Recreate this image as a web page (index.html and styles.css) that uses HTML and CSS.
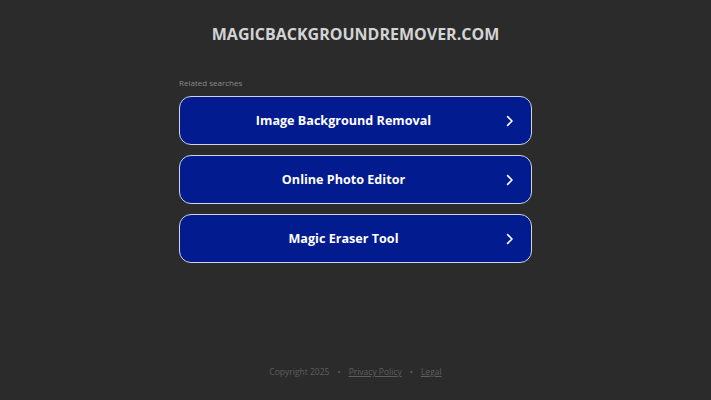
FILE: index.html
```html
<!DOCTYPE html>
<html>
<head>
<meta charset="utf-8">
<link rel="stylesheet" href="styles.css">
</head>
<body>
<div class="page">
  <header class="site-title">magicbackgroundremover.com</header>
  <main class="searches">
    <div class="label">Related searches</div>
    <div class="list">
      <a class="item" href="#"><span class="text">Image Background Removal</span><svg class="chev" viewBox="0 0 10 14" width="8" height="12"><path d="M2 1.5 L7.5 7 L2 12.5" fill="none" stroke="#fff" stroke-width="2" stroke-linecap="round" stroke-linejoin="round"/></svg></a>
      <a class="item" href="#"><span class="text">Online Photo Editor</span><svg class="chev" viewBox="0 0 10 14" width="8" height="12"><path d="M2 1.5 L7.5 7 L2 12.5" fill="none" stroke="#fff" stroke-width="2" stroke-linecap="round" stroke-linejoin="round"/></svg></a>
      <a class="item" href="#"><span class="text">Magic Eraser Tool</span><svg class="chev" viewBox="0 0 10 14" width="8" height="12"><path d="M2 1.5 L7.5 7 L2 12.5" fill="none" stroke="#fff" stroke-width="2" stroke-linecap="round" stroke-linejoin="round"/></svg></a>
    </div>
  </main>
  <footer class="footer">
    <span>Copyright 2025</span><span class="dot">•</span><a href="#">Privacy Policy</a><span class="dot">•</span><a href="#">Legal</a>
  </footer>
</div>
</body>
</html>
```
FILE: styles.css
```css
html, body {
  margin: 0;
  padding: 0;
  background: #2b2b2b;
  font-family: "Open Sans", "DejaVu Sans", sans-serif;
}
.page {
  width: 711px;
  height: 400px;
  display: flex;
  flex-direction: column;
  align-items: center;
}
.site-title {
  margin-top: 23px;
  font-size: 16px;
  font-weight: 700;
  letter-spacing: 0;
  text-transform: uppercase;
  color: #d4d4d4;
  line-height: 22px;
}
.searches {
  margin-top: 33px;
  width: 353px;
}
.label {
  font-size: 8px;
  color: #8a8a8a;
  line-height: 10px;
  margin-bottom: 8px;
}
.list {
  display: flex;
  flex-direction: column;
  gap: 10.5px;
}
.item {
  box-sizing: border-box;
  height: 48.5px;
  border: 1.5px solid #d0d4e6;
  border-radius: 12px;
  background: #021b8f;
  display: flex;
  align-items: center;
  justify-content: center;
  padding-right: 24px;
  position: relative;
  text-decoration: none;
}
.text {
  color: #fff;
  font-size: 12.6px;
  font-weight: 700;
}
.chev {
  position: absolute;
  right: 17px;
  top: 17.5px;
}
.footer {
  margin-top: auto;
  margin-bottom: 23px;
  font-size: 8.5px;
  color: #5e5e5e;
  display: flex;
  gap: 8px;
  line-height: 11px;
}
.footer a {
  color: #5e5e5e;
  text-decoration: underline;
}
```
